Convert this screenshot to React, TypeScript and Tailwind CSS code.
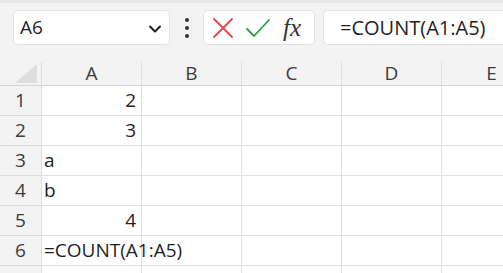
import React from 'react';

const cols = ['A', 'B', 'C', 'D', 'E'];

const rows: { n: number; value?: string; align?: 'left' | 'right' }[] = [
  { n: 1, value: '2', align: 'right' },
  { n: 2, value: '3', align: 'right' },
  { n: 3, value: 'a', align: 'left' },
  { n: 4, value: 'b', align: 'left' },
  { n: 5, value: '4', align: 'right' },
  { n: 6, value: '=COUNT(A1:A5)', align: 'left' },
];

const font = { fontFamily: '"Open Sans", "Noto Sans", sans-serif' };

export default function App() {
  return (
    <div className="w-[503px] h-[273px] overflow-hidden bg-[#f3f3f3] text-[#1f1f1f]" style={font}>
      <div className="h-[3px] bg-[#e8e8e8]" />

      {/* formula bar */}
      <div className="flex items-start pl-[13px] pt-[7px] h-[52px]">
        <div className="flex items-center w-[157px] h-[35px] bg-white border border-[#e2e2e2] rounded-[5px] pl-[6px] pr-[7px]">
          <span className="text-[19px] flex-1 leading-none">A6</span>
          <svg width="14" height="10" viewBox="0 0 14 10" className="mt-[2px]">
            <path d="M2 2.5 L7 7.5 L12 2.5" fill="none" stroke="#222" strokeWidth="2" strokeLinecap="round" strokeLinejoin="round" />
          </svg>
        </div>
        <div className="w-[33px] h-[35px] flex flex-col items-center justify-center gap-[4px]">
          <div className="w-[4px] h-[4px] rounded-full bg-[#333]" />
          <div className="w-[4px] h-[4px] rounded-full bg-[#333]" />
          <div className="w-[4px] h-[4px] rounded-full bg-[#333]" />
        </div>
        <div className="flex items-center w-[112px] h-[35px] bg-white border border-[#e2e2e2] rounded-[5px]">
          <svg width="22" height="22" viewBox="0 0 22 22" className="ml-[8px]">
            <path d="M2 2 L20 20 M20 2 L2 20" stroke="#e8464a" strokeWidth="1.8" strokeLinecap="round" />
          </svg>
          <svg width="26" height="22" viewBox="0 0 26 22" className="ml-[11px]">
            <path d="M2 12 L9 19 L24 3" fill="none" stroke="#2e9e3e" strokeWidth="1.8" strokeLinecap="round" strokeLinejoin="round" />
          </svg>
          <span
            className="ml-[12px] text-[25px] italic leading-none text-[#333]"
            style={{ fontFamily: '"Liberation Serif", "DejaVu Serif", serif' }}
          >
            fx
          </span>
        </div>
        <div className="ml-[8px] flex-1 h-[35px] bg-white border border-[#e2e2e2] border-r-0 rounded-l-[5px] flex items-center pl-[16px]">
          <span className="text-[20px] leading-none whitespace-nowrap">=COUNT(A1:A5)</span>
        </div>
      </div>

      {/* grid */}
      <div className="mt-[7px]">
        <div className="flex h-[24px] border-b border-[#d4d4d4]">
          <div className="w-[42px] shrink-0 border-r border-[#dcdcdc] relative">
            <svg width="22" height="19" viewBox="0 0 22 19" className="absolute left-[15px] top-[2px]">
              <path d="M22 0 L22 19 L0 19 Z" fill="#dedede" />
            </svg>
          </div>
          {cols.map((c) => (
            <div
              key={c}
              className="w-[100px] shrink-0 border-r border-[#e0e0e0] flex items-center justify-center text-[19px] text-[#3c3c3c]"
            >
              {c}
            </div>
          ))}
        </div>
        {rows.map((r) => (
          <div key={r.n} className="flex h-[30px]">
            <div className="w-[42px] shrink-0 border-r border-b border-[#dcdcdc] flex items-center justify-center text-[19px] text-[#3c3c3c]">
              {r.n}
            </div>
            <div
              className={`w-[100px] shrink-0 bg-white border-r border-b border-[#e0e0e0] flex items-center text-[19px] whitespace-nowrap ${
                r.align === 'right' ? 'justify-end pr-[5px]' : 'pl-[2px]'
              }`}
            >
              {r.value ? <span className="relative z-10">{r.value}</span> : null}
            </div>
            {cols.slice(1).map((c) => (
              <div key={c} className="w-[100px] shrink-0 bg-white border-r border-b border-[#e0e0e0]" />
            ))}
          </div>
        ))}
        <div className="flex h-[30px]">
          <div className="w-[42px] shrink-0 border-r border-[#dcdcdc]" />
          {cols.map((c) => (
            <div key={c} className="w-[100px] shrink-0 bg-white border-r border-[#e0e0e0]" />
          ))}
        </div>
      </div>
    </div>
  );
}
